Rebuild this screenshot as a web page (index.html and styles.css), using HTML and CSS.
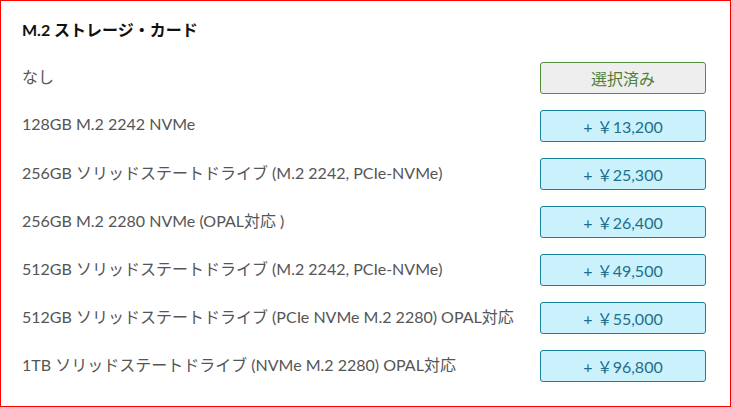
FILE: index.html
```html
<!DOCTYPE html>
<html lang="ja">
<head>
    <meta charset="UTF-8">
    <meta name="viewport" content="width=device-width, initial-scale=1.0">
    <title>M.2 ストレージ・カード</title>
    <link rel="stylesheet" href="styles.css">
</head>
<body>
    <div class="panel">
        <h2 class="title">M.2 ストレージ・カード</h2>

        <div class="option">
            <span class="label">なし</span>
            <button class="btn selected">選択済み</button>
        </div>
        <div class="option">
            <span class="label">128GB M.2 2242 NVMe</span>
            <button class="btn">+ ￥13,200</button>
        </div>
        <div class="option">
            <span class="label">256GB ソリッドステートドライブ (M.2 2242, PCIe-NVMe)</span>
            <button class="btn">+ ￥25,300</button>
        </div>
        <div class="option">
            <span class="label">256GB M.2 2280 NVMe (OPAL対応 )</span>
            <button class="btn">+ ￥26,400</button>
        </div>
        <div class="option">
            <span class="label">512GB ソリッドステートドライブ (M.2 2242, PCIe-NVMe)</span>
            <button class="btn">+ ￥49,500</button>
        </div>
        <div class="option">
            <span class="label">512GB ソリッドステートドライブ (PCIe NVMe M.2 2280) OPAL対応</span>
            <button class="btn">+ ￥55,000</button>
        </div>
        <div class="option">
            <span class="label">1TB ソリッドステートドライブ (NVMe M.2 2280) OPAL対応</span>
            <button class="btn">+ ￥96,800</button>
        </div>
    </div>
</body>
</html>
```

FILE: styles.css
```css
body {
    margin: 0;
    padding: 0;
    font-family: Lato, "Noto Sans CJK JP", sans-serif;
    background: #fff;
}
.panel {
    box-sizing: border-box;
    width: 731px;
    height: 407px;
    border: 1px solid #ff0000;
    padding: 19px 24px 0 21px;
}
.title {
    margin: 0 0 22px 0;
    font-size: 16px;
    line-height: 20px;
    font-weight: bold;
    color: #111;
}
.option {
    display: flex;
    justify-content: space-between;
    align-items: center;
    height: 32px;
    margin-bottom: 16px;
}
.label {
    font-size: 16px;
    color: #555;
    margin-top: -5px;
}
.btn {
    box-sizing: border-box;
    width: 166px;
    height: 32px;
    border: 1px solid #17809f;
    border-radius: 3px;
    background: #cbf1fc;
    color: #1d6f8c;
    font-family: Lato, "Noto Sans CJK JP", sans-serif;
    font-size: 16px;
    padding: 0;
}
.btn.selected {
    border-color: #4f8f3b;
    background: #eeeeee;
    color: #4f7f3a;
}
```
